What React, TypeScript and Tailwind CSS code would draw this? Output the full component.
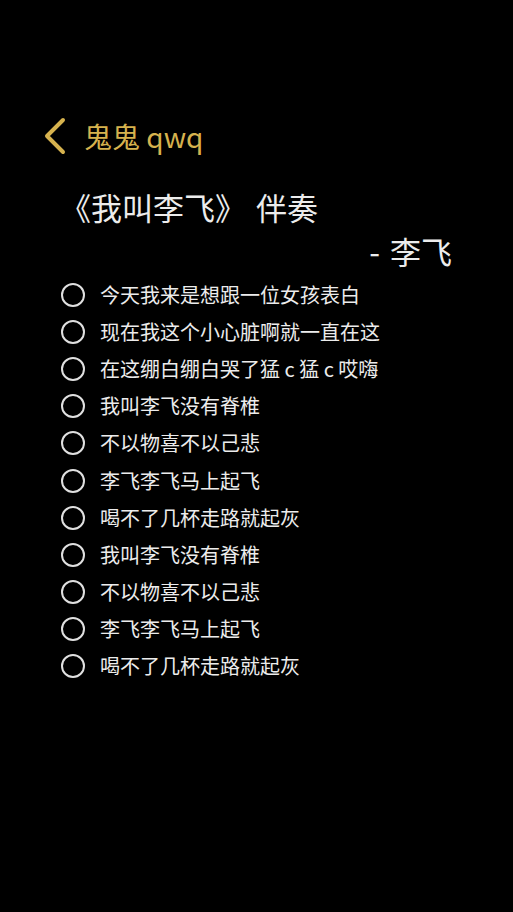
import React from "react";

const lines = [
  "今天我来是想跟一位女孩表白",
  "现在我这个小心脏啊就一直在这",
  "在这绷白绷白哭了猛 c 猛 c 哎嗨",
  "我叫李飞没有脊椎",
  "不以物喜不以己悲",
  "李飞李飞马上起飞",
  "喝不了几杯走路就起灰",
  "我叫李飞没有脊椎",
  "不以物喜不以己悲",
  "李飞李飞马上起飞",
  "喝不了几杯走路就起灰",
];

export default function App() {
  return (
    <div
      className="w-[513px] h-[912px] bg-black overflow-hidden"
      style={{ fontFamily: '"Noto Sans CJK SC", "Noto Sans", sans-serif' }}
    >
      <div className="pt-[116px] h-[156px] flex items-center pl-[44px]">
        <svg width="24" height="40" viewBox="0 0 24 40" className="shrink-0">
          <path
            d="M19 4 L3 20 L19 36"
            fill="none"
            stroke="#d6b24e"
            strokeWidth="4"
            strokeLinecap="round"
            strokeLinejoin="round"
          />
        </svg>
        <span className="ml-[16px] text-[28px] leading-[40px] text-[#d6b24e]">鬼鬼 qwq</span>
      </div>
      <div className="mt-[29px] h-[44px] pl-[60px] flex items-center text-[31px] leading-[44px] text-[#ececec]">
        <span>《我叫李飞》</span>
        <span className="ml-[10px]">伴奏</span>
      </div>
      <div className="h-[44px] pr-[61px] flex justify-end items-center text-[31px] leading-[44px] text-[#ececec]">
        <span className="mr-[10px]">-</span>
        <span>李飞</span>
      </div>
      <div className="mt-[3px] flex flex-col">
        {lines.map((t, i) => (
          <div key={i} className="h-[37.2px] flex items-center pl-[61px]">
            <div className="w-[24px] h-[24px] rounded-full border-2 border-[#e0e0e0] shrink-0" />
            <span className="ml-[15px] text-[20px] leading-[28px] text-[#ececec] whitespace-nowrap">
              {t}
            </span>
          </div>
        ))}
      </div>
    </div>
  );
}
